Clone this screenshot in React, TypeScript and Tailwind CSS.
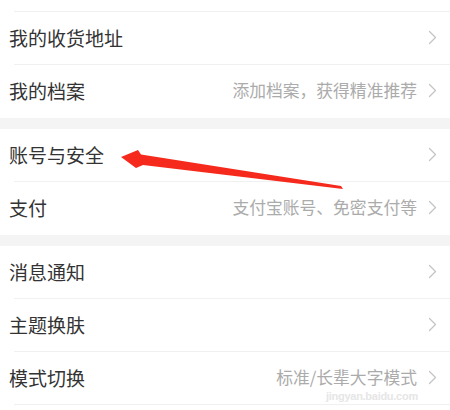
import React from "react";

type Row = { title: string; hint?: string; border?: boolean };

const Chevron = () => (
  <svg width="9" height="15" viewBox="0 0 9 15" className="shrink-0">
    <path d="M1.5 1.5 L7.5 7.5 L1.5 13.5" fill="none" stroke="#c4c4c4" strokeWidth="1.3" strokeLinecap="round" strokeLinejoin="round" />
  </svg>
);

const Item = ({ title, hint, border }: Row) => (
  <div className="pl-[14px] bg-white">
    <div className={"h-[53px] flex items-center pr-[13px] pb-[2px] " + (border ? "border-b border-[#f0f0f0]" : "")}>
      <span className="flex-1 -ml-[5px] text-[19px] text-[#333333] leading-none">{title}</span>
      {hint && <span className="text-[16.8px] text-[#ababab] leading-none mr-[11px]">{hint}</span>}
      <Chevron />
    </div>
  </div>
);

export default function App() {
  return (
    <div
      className="relative w-[450px] h-[410px] overflow-hidden bg-white"
      style={{ fontFamily: '"Noto Sans CJK SC", "Noto Sans", sans-serif' }}
    >
      <div className="pl-[14px]">
        <div className="h-[12px] border-b border-[#f0f0f0]" />
      </div>
      <Item title="我的收货地址" border />
      <Item title="我的档案" hint="添加档案，获得精准推荐" />
      <div className="h-[11px] bg-[#f4f4f4]" />
      <Item title="账号与安全" border />
      <Item title="支付" hint="支付宝账号、免密支付等" />
      <div className="h-[11px] bg-[#f4f4f4]" />
      <Item title="消息通知" border />
      <Item title="主题换肤" border />
      <Item title="模式切换" hint="标准/长辈大字模式" border />

      <div className="absolute left-[326px] top-[391px] text-[11px] leading-none text-[#e6e6e6] font-bold tracking-tight" style={{ fontFamily: '"Liberation Sans", sans-serif' }}>
        jingyan.baidu.com
      </div>

      <svg className="absolute left-0 top-0 pointer-events-none" width="450" height="410" viewBox="0 0 450 410">
        <polygon
          points="121,157 138,150 141,154.5 341,186 343,189 143,165 136,168"
          fill="#f52a1c"
        />
      </svg>
    </div>
  );
}
